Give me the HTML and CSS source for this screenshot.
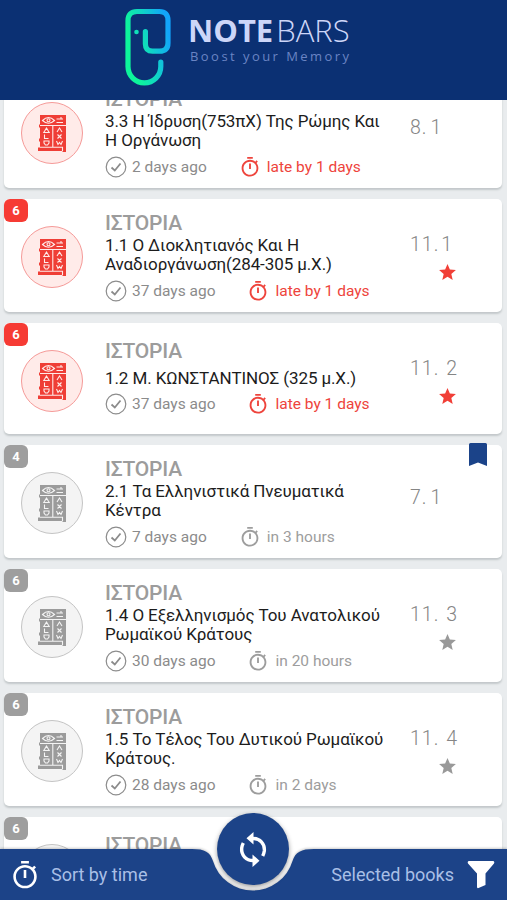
FILE: index.html
```html
<!DOCTYPE html>
<html lang="el">
<head>
    <meta charset="UTF-8">
    <meta name="viewport" content="width=device-width, initial-scale=1.0">
    <title>Notebars</title>
    <link rel="stylesheet" href="styles.css">
</head>
<body>
    <svg class="defs" width="0" height="0">
        <symbol id="tablet" viewBox="0 0 28 37">
            <path fill="currentColor" d="M2 0H28V11L29 12V15L28 16V37H24.500V36H0V32.500H2V27L1 26V24L2 23V13L1 12V10L2 9Z"/>
            <g fill="none" stroke="var(--hole)" stroke-width="1.100">
                <path d="M2 10.500H28M14.800 10.500V32M2 32.300H24.500V36"/>
                <path d="M4.500 5.500Q10.500-.5 16.500 5.500Q10.500 11 4.500 5.500Z"/>
                <circle cx="10.500" cy="5.300" r="1.500"/>
                <path d="M18.500 4H25M18.500 7.500H25M23 2V4"/>
                <path d="M8.500 13L5.800 17.500H11.200ZM6.500 19.500V23.500H10.500M6 26H11V28L9.500 30H7.500L6 28Z"/>
                <path d="M19 17L21.500 13L24 17M19.500 19.500L23.500 23.500M23.500 19.500L19.500 23.500M18.500 26L20 29.500L21.500 27.500L23 29.500L24.500 26"/>
            </g>
        </symbol>
        <symbol id="check" viewBox="0 0 22 22">
            <g fill="none" stroke="currentColor">
                <circle cx="11" cy="11" r="9.800" stroke-width="1.200"/>
                <path d="M6.500 11.500L9.800 14.500L15.500 7.500" stroke-width="1.800"/>
            </g>
        </symbol>
        <symbol id="timer" viewBox="2.500 1 19 21.500">
            <path fill="currentColor" d="M15 1H9v2h6V1zm-4 13h2V8h-2v6zm8.030-6.610l1.420-1.420c-.43-.51-.9-.99-1.410-1.410l-1.420 1.420C16.070 4.740 14.120 4 12 4c-4.970 0-9 4.030-9 9s4.020 9 9 9 9-4.030 9-9c0-2.120-.74-4.070-1.970-5.610zM12 20c-3.870 0-7-3.130-7-7s3.130-7 7-7 7 3.130 7 7-3.130 7-7 7z"/>
        </symbol>
        <symbol id="star" viewBox="2 2 20 19">
            <path fill="currentColor" d="M12 17.270L18.180 21l-1.640-7.030L22 9.240l-7.190-.61L12 2 9.190 8.630 2 9.240l5.460 4.730L5.820 21z"/>
        </symbol>
    </svg>

    <div class="app">
        <header class="head">
            <svg class="logo" width="48" height="78" viewBox="0 0 48 78">
                <defs>
                    <linearGradient id="trunk" gradientUnits="userSpaceOnUse" x1="3" y1="40" x2="46" y2="30">
                        <stop offset="0.100" stop-color="#0df59b"/>
                        <stop offset="0.500" stop-color="#10d6c4"/>
                        <stop offset="1" stop-color="#12a4fb"/>
                    </linearGradient>
                </defs>
                <path fill="none" stroke="url(#trunk)" stroke-width="5.200" stroke-linecap="round" d="M21.400 23.500V36Q21.400 43.200 28.600 43.200H35.500Q44 43.200 44 35V12.500Q44 3.500 35.500 3.500H13Q4 3.500 4 12.500V58.500A16.400 16.400 0 0 0 36.800 58.500V54"/>
                <circle cx="12.500" cy="24" r="2.300" fill="#10dfb9"/>
            </svg>
            <div class="brand">
                <h1><b>NOTE</b>BARS</h1>
                <p>Boost your Memory</p>
            </div>
        </header>

        <main class="list">
            <div class="card late">
                <div class="pic"><svg><use href="#tablet"/></svg></div>
                <div class="info">
                    <h2>ΙΣΤΟΡΙΑ</h2>
                    <h3>3.3 Η Ίδρυση(753πΧ) Της Ρώμης Και<br>Η Οργάνωση</h3>
                    <div class="meta">
                        <svg class="check"><use href="#check"/></svg><span class="ago">2 days ago</span>
                        <svg class="timer"><use href="#timer"/></svg><span class="due">late by 1 days</span>
                    </div>
                </div>
                <div class="num"><div><span>8.</span><span>1</span></div></div>
            </div>

            <div class="card late">
                <div class="badge">6</div>
                <div class="pic"><svg><use href="#tablet"/></svg></div>
                <div class="info">
                    <h2>ΙΣΤΟΡΙΑ</h2>
                    <h3>1.1 Ο Διοκλητιανός Και Η<br>Αναδιοργάνωση(284-305 μ.Χ.)</h3>
                    <div class="meta">
                        <svg class="check"><use href="#check"/></svg><span class="ago">37 days ago</span>
                        <svg class="timer"><use href="#timer"/></svg><span class="due">late by 1 days</span>
                    </div>
                </div>
                <div class="num starred near"><div><span>11.</span><span>1</span></div><svg><use href="#star"/></svg></div>
            </div>

            <div class="card late single">
                <div class="badge">6</div>
                <div class="pic"><svg><use href="#tablet"/></svg></div>
                <div class="info">
                    <h2>ΙΣΤΟΡΙΑ</h2>
                    <h3>1.2 Μ. ΚΩΝΣΤΑΝΤΙΝΟΣ (325 μ.Χ.)</h3>
                    <div class="meta">
                        <svg class="check"><use href="#check"/></svg><span class="ago">37 days ago</span>
                        <svg class="timer"><use href="#timer"/></svg><span class="due">late by 1 days</span>
                    </div>
                </div>
                <div class="num starred"><div><span>11.</span><span>2</span></div><svg><use href="#star"/></svg></div>
            </div>

            <div class="card">
                <div class="badge">4</div>
                <svg class="bookmark" viewBox="0 0 20 25"><path d="M2.500 1H17.500Q19 1 19 2.500V24L10 20.500L1 24V2.500Q1 1 2.500 1Z"/></svg>
                <div class="pic"><svg><use href="#tablet"/></svg></div>
                <div class="info">
                    <h2>ΙΣΤΟΡΙΑ</h2>
                    <h3>2.1 Τα Ελληνιστικά Πνευματικά<br>Κέντρα</h3>
                    <div class="meta">
                        <svg class="check"><use href="#check"/></svg><span class="ago">7 days ago</span>
                        <svg class="timer"><use href="#timer"/></svg><span class="due">in 3 hours</span>
                    </div>
                </div>
                <div class="num"><div><span>7.</span><span>1</span></div></div>
            </div>

            <div class="card">
                <div class="badge">6</div>
                <div class="pic"><svg><use href="#tablet"/></svg></div>
                <div class="info">
                    <h2>ΙΣΤΟΡΙΑ</h2>
                    <h3>1.4 Ο Εξελληνισμός Του Ανατολικού<br>Ρωμαϊκού Κράτους</h3>
                    <div class="meta">
                        <svg class="check"><use href="#check"/></svg><span class="ago">30 days ago</span>
                        <svg class="timer"><use href="#timer"/></svg><span class="due">in 20 hours</span>
                    </div>
                </div>
                <div class="num starred"><div><span>11.</span><span>3</span></div><svg><use href="#star"/></svg></div>
            </div>

            <div class="card">
                <div class="badge">6</div>
                <div class="pic"><svg><use href="#tablet"/></svg></div>
                <div class="info">
                    <h2>ΙΣΤΟΡΙΑ</h2>
                    <h3>1.5 Το Τέλος Του Δυτικού Ρωμαϊκού<br>Κράτους.</h3>
                    <div class="meta">
                        <svg class="check"><use href="#check"/></svg><span class="ago">28 days ago</span>
                        <svg class="timer"><use href="#timer"/></svg><span class="due">in 2 days</span>
                    </div>
                </div>
                <div class="num starred"><div><span>11.</span><span>4</span></div><svg><use href="#star"/></svg></div>
            </div>

            <div class="card single">
                <div class="badge">6</div>
                <div class="pic"></div>
                <div class="info">
                    <h2>ΙΣΤΟΡΙΑ</h2>
                </div>
            </div>
        </main>

        <footer class="foot">
            <svg class="bar" viewBox="0 0 507 51">
                <path d="M0 0H192C205 0 210 3 213 12A41.500 41.500 0 0 0 292.500 12C295.500 3 301 0 314 0H507V51H0Z"/>
            </svg>
            <div class="sort">
                <svg><use href="#timer"/></svg>
                <span>Sort by time</span>
            </div>
            <button class="sync">
                <svg width="28" height="36" viewBox="0 0 28 36">
                    <g fill="none" stroke="#fff" stroke-width="3.400">
                        <path d="M13 7.500C21 7 26 13 25.300 20C25 22 24.500 23.500 23.700 25"/>
                        <path d="M15 29.500C7 30 2 24 2.700 17C3 15 3.500 13.500 4.300 12"/>
                    </g>
                    <path fill="#fff" d="M14.500 1V13.500L7.500 7.200ZM13.500 23.500V36L20.500 29.800Z"/>
                </svg>
            </button>
            <div class="filter">
                <span>Selected books</span>
                <svg width="28" height="29" viewBox="0 0 28 29">
                    <path fill="#fff" d="M2 1H26Q28 1.500 27 3.500L18.500 13.500V25L11.500 28Q10 28.500 10 27V13.500L1 3.500Q0 1.500 2 1Z"/>
                </svg>
            </div>
        </footer>
    </div>
</body>
</html>
```

FILE: styles.css
```css
*{
    margin: 0;
    padding: 0;
    box-sizing: border-box;
}
html,body{
    height: 100%;
}
body{
    font-family: Roboto, "Noto Sans", sans-serif;
    background-color: #e9ecee;
    overflow: hidden;
}
.defs{
    position: absolute;
}
.app{
    height: 900px;
    width: 507px;
    position: relative;
    display: flex;
    flex-direction: column;
}
.head{
    height: 100px;
    flex-shrink: 0;
    background-color: #0b3073;
    display: flex;
    padding: 8px 0 0 124px;
    gap: 16px;
}
.brand h1{
    font-family: "Open Sans", sans-serif;
    font-size: 31px;
    font-weight: 300;
    line-height: 34px;
    margin-top: 5px;
    color: #cdd6f8;
}
.brand b{
    font-weight: 700;
    margin-right: 3px;
}
.brand p{
    font-family: "Open Sans", sans-serif;
    font-size: 13px;
    line-height: 18px;
    letter-spacing: 2.450px;
    padding-left: 2px;
    white-space: nowrap;
    color: #6a84c4;
}
.list{
    flex: 1;
    overflow: hidden;
    padding: 0 5px 0 4px;
    display: flex;
    flex-direction: column;
    gap: 11px;
}
.card{
    --hole: #f4f4f4;
    position: relative;
    flex-shrink: 0;
    height: 113px;
    display: flex;
    background-color: #fff;
    border-radius: 5px;
    box-shadow: 0 2px 2px #c3c8ca;
    color: #9b9b9b;
}
.card:first-child{
    margin-top: -25px;
}
.card.single{
    height: 111px;
}
.card.late{
    --hole: #ffebe9;
}
.badge{
    position: absolute;
    left: 0;
    top: 0;
    width: 24px;
    height: 23px;
    border-radius: 6px;
    background-color: #9e9e9e;
    color: #fff;
    font-size: 13px;
    font-weight: 700;
    line-height: 23px;
    text-align: center;
}
.late .badge{
    background-color: #f63b34;
}
.bookmark{
    position: absolute;
    right: 14px;
    top: -3px;
    width: 20px;
    height: 25px;
    fill: #1b4389;
}
.pic{
    width: 62px;
    height: 62px;
    flex-shrink: 0;
    margin: 27px 22px 0 17px;
    border: 1px solid #c4c4c4;
    border-radius: 50%;
    background-color: #f4f4f4;
    display: flex;
    align-items: center;
    justify-content: center;
}
.late .pic{
    border-color: #f59a98;
    background-color: #ffebe9;
    color: #ef3e36;
}
.pic svg{
    width: 28px;
    height: 37px;
    overflow: visible;
}
.info{
    width: 305px;
    padding-top: 13px;
    white-space: nowrap;
}
.info h2{
    font-size: 21px;
    font-weight: 500;
    line-height: 23px;
    letter-spacing: -.2px;
    color: #9c9c9c;
}
.info h3{
    font-size: 17px;
    font-weight: 400;
    line-height: 19px;
    letter-spacing: -.1px;
    padding-top: 1px;
    color: #1c1c1c;
}
.single .info{
    padding-top: 17px;
}
.single h3{
    padding: 6px 0 2px;
}
.meta{
    display: flex;
    align-items: center;
    height: 22px;
    margin-top: 6px;
    font-size: 15.500px;
    color: #8b8b8b;
}
.single .meta{
    margin-top: 3px;
}
.check{
    width: 22px;
    height: 22px;
    margin-right: 5px;
}
.timer{
    width: 18px;
    height: 20px;
    margin: -1px 8px 0 34px;
}
.timer,.due{
    color: #9d9d9d;
}
.late .timer,.late .due{
    color: #ee443c;
}
.num{
    font-size: 19.500px;
    font-weight: 300;
    color: #858585;
    padding-top: 41px;
    letter-spacing: 1px;
    line-height: 24px;
}
.num span + span{
    margin-left: 3px;
}
.num.starred{
    padding-top: 34px;
}
.num.starred span + span{
    margin-left: 7px;
}
.num.near span + span{
    margin-left: 2px;
}
.num svg{
    display: block;
    width: 17px;
    height: 16px;
    margin: 7px 0 0 29px;
    color: #999;
}
.late .num svg{
    color: #f13f37;
}
.foot{
    position: absolute;
    left: 0;
    bottom: 0;
    width: 507px;
    height: 51px;
    display: flex;
    align-items: center;
    justify-content: space-between;
    padding: 0 12px;
    font-size: 18px;
    color: #a9bfe6;
}
.bar{
    position: absolute;
    left: 0;
    top: 0;
    width: 507px;
    height: 51px;
    fill: #1c4388;
    overflow: visible;
    filter: drop-shadow(0 -1px 1px rgba(0,0,0,.2));
}
.sort,.filter{
    position: relative;
    display: flex;
    align-items: center;
    gap: 13px;
}
.sort svg{
    width: 26px;
    height: 28px;
    color: #fff;
}
.sync{
    position: absolute;
    left: 217px;
    top: -36px;
    width: 72px;
    height: 72px;
    border: 0;
    border-radius: 50%;
    background-color: #1c4388;
    box-shadow: 0 2px 5px rgba(0,0,0,.4);
    display: flex;
    align-items: center;
    justify-content: center;
}
```
